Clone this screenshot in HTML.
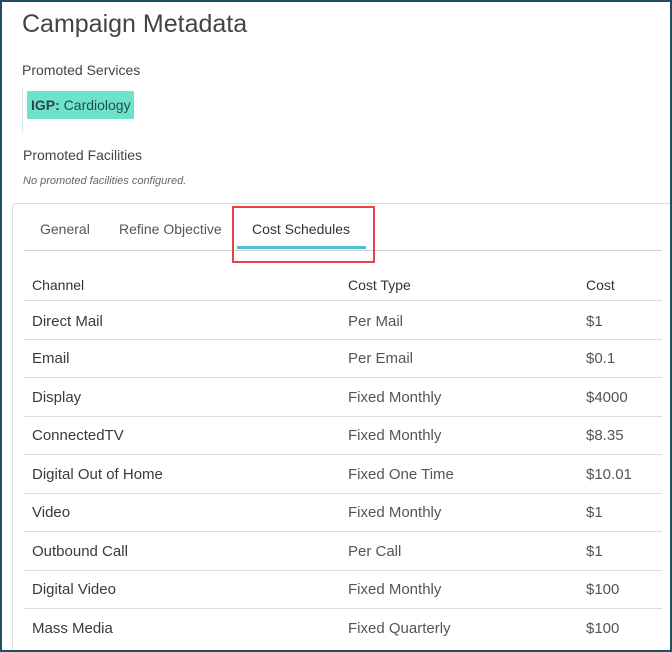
<!DOCTYPE html>
<html style="width:672px;height:652px;overflow:hidden"><head><style>
*{margin:0;padding:0;box-sizing:border-box}
body{width:672px;height:652px;overflow:hidden;background:#fff;font-family:"Liberation Sans",sans-serif;color:#333;position:relative}
.frame{position:absolute;left:0;top:0;width:672px;height:652px;border:2px solid #1f4e5f}
.a{position:absolute;white-space:nowrap}
.line{position:absolute;height:1px;background:#ddd}
.ch{font-size:15px;color:#3a3a3a}
.ct{font-size:15px;color:#555}
</style></head><body>
<div class="a" style="left:22px;top:10px;font-size:25px;color:#444">Campaign Metadata</div>
<div class="a" style="left:22px;top:62px;font-size:14px;color:#444">Promoted Services</div>
<div style="position:absolute;left:22px;top:87px;width:1px;height:46px;background:#d6eaea"></div>
<div class="a" style="left:27px;top:91px;width:107px;height:28px;background:#6de3cc;border-radius:1px;font-size:14px;line-height:28px;padding-left:4px;color:#2c4a44"><b>IGP:</b> Cardiology</div>
<div class="a" style="left:23px;top:147px;font-size:14px;color:#444">Promoted Facilities</div>
<div class="a" style="left:23px;top:175px;font-size:11px;font-style:italic;color:#666">No promoted facilities configured.</div>
<div style="position:absolute;left:12px;top:203px;width:680px;height:449px;border:1px solid #d8dde0;border-bottom:none;border-radius:4px 4px 0 0"></div>
<div class="a" style="left:40px;top:221px;font-size:14px;color:#555">General</div>
<div class="a" style="left:119px;top:221px;font-size:14px;color:#555">Refine Objective</div>
<div class="a" style="left:252px;top:221px;font-size:14px;color:#333">Cost Schedules</div>
<div class="line" style="left:24px;top:250px;width:638px;background:#ccd3d6"></div>
<div style="position:absolute;left:237px;top:246px;width:129px;height:3px;background:#4fc0d3"></div>
<div style="position:absolute;left:232px;top:206px;width:143px;height:57px;border:2px solid #e94445"></div>
<div class="a" style="left:32px;top:277px;font-size:14px;color:#333">Channel</div>
<div class="a" style="left:348px;top:277px;font-size:14px;color:#333">Cost Type</div>
<div class="a" style="left:586px;top:277px;font-size:14px;color:#333">Cost</div>
<div class="line" style="left:24px;top:300px;width:638px"></div>
<div class="line" style="left:24px;top:339px;width:638px"></div>
<div class="line" style="left:24px;top:377px;width:638px"></div>
<div class="line" style="left:24px;top:416px;width:638px"></div>
<div class="line" style="left:24px;top:454px;width:638px"></div>
<div class="line" style="left:24px;top:493px;width:638px"></div>
<div class="line" style="left:24px;top:531px;width:638px"></div>
<div class="line" style="left:24px;top:570px;width:638px"></div>
<div class="line" style="left:24px;top:608px;width:638px"></div>
<div class="a ch" style="left:32px;top:313px">Direct Mail</div><div class="a ct" style="left:348px;top:313px">Per Mail</div><div class="a ct" style="left:586px;top:313px">$1</div>
<div class="a ch" style="left:32px;top:350px">Email</div><div class="a ct" style="left:348px;top:350px">Per Email</div><div class="a ct" style="left:586px;top:350px">$0.1</div>
<div class="a ch" style="left:32px;top:389px">Display</div><div class="a ct" style="left:348px;top:389px">Fixed Monthly</div><div class="a ct" style="left:586px;top:389px">$4000</div>
<div class="a ch" style="left:32px;top:427px">ConnectedTV</div><div class="a ct" style="left:348px;top:427px">Fixed Monthly</div><div class="a ct" style="left:586px;top:427px">$8.35</div>
<div class="a ch" style="left:32px;top:466px">Digital Out of Home</div><div class="a ct" style="left:348px;top:466px">Fixed One Time</div><div class="a ct" style="left:586px;top:466px">$10.01</div>
<div class="a ch" style="left:32px;top:504px">Video</div><div class="a ct" style="left:348px;top:504px">Fixed Monthly</div><div class="a ct" style="left:586px;top:504px">$1</div>
<div class="a ch" style="left:32px;top:543px">Outbound Call</div><div class="a ct" style="left:348px;top:543px">Per Call</div><div class="a ct" style="left:586px;top:543px">$1</div>
<div class="a ch" style="left:32px;top:581px">Digital Video</div><div class="a ct" style="left:348px;top:581px">Fixed Monthly</div><div class="a ct" style="left:586px;top:581px">$100</div>
<div class="a ch" style="left:32px;top:620px">Mass Media</div><div class="a ct" style="left:348px;top:620px">Fixed Quarterly</div><div class="a ct" style="left:586px;top:620px">$100</div>
<div class="frame"></div>
</body></html>
